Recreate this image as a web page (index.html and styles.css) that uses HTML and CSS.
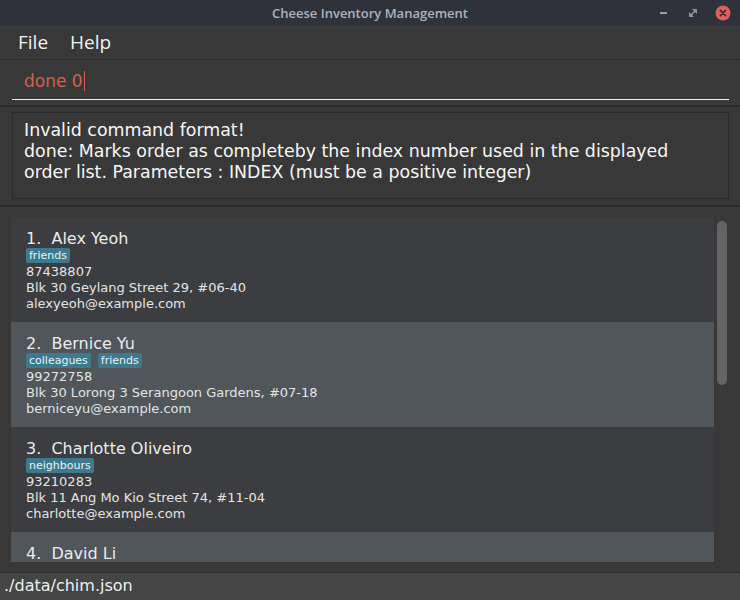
FILE: index.html
```html
<!DOCTYPE html>
<html>
<head>
<meta charset="utf-8">
<link rel="stylesheet" href="styles.css">
</head>
<body>
<div class="window">
  <header class="titlebar">
    <div></div>
    <div class="title">Cheese Inventory Management</div>
    <div class="controls">
      <span class="ctl-min"></span>
      <svg class="ctl-restore" width="8" height="8" viewBox="0 0 8 8"><polygon points="3,0 8,0 8,5" fill="#8d929c"/><polygon points="0,3 0,8 5,8" fill="#8d929c"/><line x1="1.5" y1="6.5" x2="6.5" y2="1.5" stroke="#8d929c" stroke-width="1.6"/></svg>
      <svg class="ctl-close" width="16" height="16" viewBox="0 0 16 16"><circle cx="8" cy="8" r="7.5" fill="#e25d5f"/><path d="M5.4 5.4 L10.6 10.6 M10.6 5.4 L5.4 10.6" stroke="#3b2a2e" stroke-width="1.6" stroke-linecap="round"/></svg>
    </div>
  </header>
  <nav class="menubar">
    <span class="menu-item">File</span>
    <span class="menu-item">Help</span>
  </nav>
  <section class="command">
    <div class="cmd-field"><span class="cmd-text">done 0</span><span class="caret"></span></div>
  </section>
  <section class="result">
    <div class="result-box">Invalid command format!<br>done: Marks order as completeby the index number used in the displayed<br>order list. Parameters : INDEX (must be a positive integer)</div>
  </section>
  <section class="list">
    <div class="viewport">
      <div class="cell odd">
        <div class="name">1.&nbsp;&nbsp;Alex Yeoh</div>
        <div class="tags"><span class="tag">friends</span></div>
        <div class="line">87438807</div>
        <div class="line">Blk 30 Geylang Street 29, #06-40</div>
        <div class="line">alexyeoh@example.com</div>
      </div>
      <div class="cell even">
        <div class="name">2.&nbsp;&nbsp;Bernice Yu</div>
        <div class="tags"><span class="tag">colleagues</span><span class="tag">friends</span></div>
        <div class="line">99272758</div>
        <div class="line">Blk 30 Lorong 3 Serangoon Gardens, #07-18</div>
        <div class="line">berniceyu@example.com</div>
      </div>
      <div class="cell odd">
        <div class="name">3.&nbsp;&nbsp;Charlotte Oliveiro</div>
        <div class="tags"><span class="tag">neighbours</span></div>
        <div class="line">93210283</div>
        <div class="line">Blk 11 Ang Mo Kio Street 74, #11-04</div>
        <div class="line">charlotte@example.com</div>
      </div>
      <div class="cell even">
        <div class="name">4.&nbsp;&nbsp;David Li</div>
      </div>
    </div>
    <div class="scrolltrack"><div class="thumb"></div></div>
  </section>
  <footer class="status">./data/chim.json</footer>
</div>
</body>
</html>
```
FILE: styles.css
```css
html, body {
  margin: 0;
  padding: 0;
  background: #383838;
}
.window {
  width: 740px;
  height: 600px;
  display: flex;
  flex-direction: column;
  font-family: "DejaVu Sans", sans-serif;
  color: #f0f0f0;
  overflow: hidden;
}
.titlebar {
  height: 25px;
  flex: none;
  background: #2f323b;
  display: grid;
  grid-template-columns: 1fr auto 1fr;
  align-items: center;
}
.title {
  font-family: "Open Sans", sans-serif;
  font-weight: 600;
  font-size: 13px;
  color: #aeb3bd;
}
.controls {
  display: flex;
  justify-content: flex-end;
  align-items: center;
  padding-right: 9px;
}
.ctl-min {
  width: 7px;
  height: 2px;
  background: #9a9fa9;
  margin-right: 22px;
}
.ctl-restore {
  margin-right: 18px;
}
.menubar {
  height: 34px;
  flex: none;
  display: flex;
  align-items: center;
  gap: 22px;
  padding-left: 18px;
  border-bottom: 1px solid #2c2c2c;
  font-family: "Open Sans", sans-serif;
  font-size: 19px;
  color: #f2f2f2;
}
.command {
  height: 45px;
  flex: none;
  padding: 0 11px 0 12px;
}
.cmd-field {
  height: 40px;
  border-bottom: 1px solid #f4f4f4;
  display: flex;
  align-items: center;
  padding-left: 12px;
  box-sizing: border-box;
  padding-top: 3px;
}
.cmd-text {
  font-size: 17px;
  color: #cf624b;
}
.caret {
  width: 1px;
  height: 20px;
  background: #cf624b;
  margin-left: 1px;
}
.result {
  flex: none;
  border-top: 2px solid #2c2c2c;
  padding: 5px 11px 6px 12px;
}
.result-box {
  height: 78px;
  border: 1px solid #2a2a2a;
  padding: 7px 11px 0 11px;
  font-size: 17.4px;
  line-height: 21px;
  color: #f7f7f7;
}
.list {
  flex: none;
  height: 367px;
  box-sizing: border-box;
  border-top: 2px solid #2c2c2c;
  display: flex;
  padding: 10px 0 10px 11px;
}
.viewport {
  width: 703px;
  overflow: hidden;
}
.cell {
  height: 105px;
  box-sizing: border-box;
  padding: 12px 0 0 15px;
  color: #e4e4e4;
}
.odd { background: #3c3d40; }
.even { background: #50565a; }
.name {
  font-size: 16px;
  line-height: 19px;
  color: #ececec;
}
.tags {
  display: flex;
  gap: 7px;
  height: 15px;
  margin-bottom: 1px;
}
.tag {
  background: #3b7a8f;
  color: #eaf4f7;
  font-size: 11px;
  line-height: 15px;
  padding: 0 3px;
  border-radius: 2px;
}
.line {
  font-size: 13px;
  line-height: 16px;
}
.scrolltrack {
  flex: 1;
  padding: 4px 0 0 3px;
}
.thumb {
  width: 10px;
  height: 164px;
  border-radius: 5px;
  background: #646464;
}
.status {
  flex: 1;
  border-top: 1px solid #2a2a2a;
  background: #454545;
  font-size: 16px;
  line-height: 26px;
  padding-left: 4px;
  color: #f0f0f0;
}
```
